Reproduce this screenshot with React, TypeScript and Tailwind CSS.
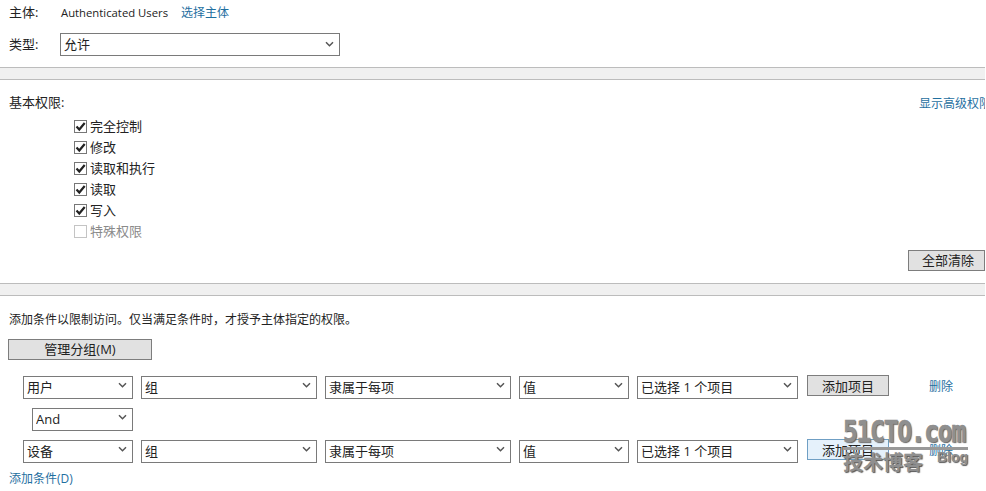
import React from 'react';

const font = "font-['Open_Sans','Noto_Sans_CJK_SC',sans-serif]";

// Dropdown with the flat Windows chevron
const Select = ({ value, width }: { value: string; width: string }) => (
  <div className={`relative h-[23px] shrink-0 ${width}`}>
    <select
      defaultValue={value}
      className="w-full h-full appearance-none bg-white border border-[#7a7a7a] pl-[3px] text-[13px] leading-[21px] text-[#222] outline-none"
    >
      <option>{value}</option>
    </select>
    <svg viewBox="0 0 10 8" className="absolute right-[6px] top-[8px] w-[9px] h-[7px] pointer-events-none">
      <path d="M1 1.5 L5 5.5 L9 1.5" fill="none" stroke="#555" strokeWidth="1.7" />
    </svg>
  </div>
);

const Check = ({ label, disabled }: { label: string; disabled?: boolean }) => (
  <label className={`flex items-center h-[21px] gap-[3px] text-[13px] ${disabled ? 'text-[#8a8a8a]' : 'text-[#222]'}`}>
    <span className={`w-[13px] h-[13px] border flex items-center justify-center bg-white ${disabled ? 'border-[#c4c4c4]' : 'border-[#777]'}`}>
      {!disabled && (
        <svg viewBox="0 0 11 11" className="w-[11px] h-[11px]">
          <path d="M1.5 5.5 L4.3 8.5 L9.7 2" fill="none" stroke="#222" strokeWidth="2.2" />
        </svg>
      )}
    </span>
    {label}
  </label>
);

const Band = () => <div className="h-[13px] bg-[#f0f0f0] border-y border-[#bcbcbc]" />;

const GrayButton = ({ label, className }: { label: string; className: string }) => (
  <button className={`border text-[13px] text-[#222] flex items-center justify-center ${className}`}>
    {label}
  </button>
);

const ConditionRow = ({ first, focused }: { first: string; focused?: boolean }) => (
  <div className="flex items-center h-[23px] pl-[23px]">
    <div className="flex gap-2">
      <Select value={first} width="w-[110px]" />
      <Select value="组" width="w-[176px]" />
      <Select value="隶属于每项" width="w-[186px]" />
      <Select value="值" width="w-[110px]" />
      <Select value="已选择 1 个项目" width="w-[161px]" />
    </div>
    <GrayButton
      label="添加项目"
      className={`ml-[9px] w-[82px] h-[21px] pt-[2px] ${focused ? 'bg-[#e5f1fb] border-[#6f9fc4]' : 'bg-[#e1e1e1] border-[#7d7d7d]'}`}
    />
    <a className="ml-10 pt-[2px] text-xs text-[#1f6f9f]">删除</a>
  </div>
);

export default function App() {
  return (
    <div className={`relative w-[985px] h-[491px] overflow-hidden bg-white ${font} text-[#222]`}>
      {/* principal and type */}
      <div className="flex items-center h-[26px] pl-[9px] text-[13px]">
        <span className="w-[52px]">主体:</span>
        <span className="text-[11.3px]">Authenticated Users</span>
        <a className="ml-[13px] text-xs text-[#1f6f9f]">选择主体</a>
      </div>
      <div className="flex items-center h-[23px] mt-[7px] pl-[9px] text-[13px]">
        <span className="w-[51px]">类型:</span>
        <Select value="允许" width="w-[280px]" />
      </div>
      <div className="h-[11px]" />
      <Band />

      {/* basic permissions */}
      <div className="flex justify-between h-[34px] pl-[9px] pt-[13px] text-[13px]">
        <span>基本权限:</span>
        <a className="w-[66px] h-[21px] pt-[3px] overflow-hidden whitespace-nowrap text-xs text-[#1f6f9f]">显示高级权限</a>
      </div>
      <div className="pl-[74px] mt-[2px]">
        <Check label="完全控制" />
        <Check label="修改" />
        <Check label="读取和执行" />
        <Check label="读取" />
        <Check label="写入" />
        <Check label="特殊权限" disabled />
      </div>
      <div className="flex justify-end mt-[8px]">
        <GrayButton label="全部清除" className="w-[77px] h-[21px] pl-[3px] bg-[#e1e1e1] border-[#7d7d7d]" />
      </div>
      <div className="h-[12px]" />
      <Band />

      {/* conditions */}
      <div className="pl-[9px] mt-[14px] h-[19px] text-xs leading-[19px]">添加条件以限制访问。仅当满足条件时，才授予主体指定的权限。</div>
      <div className="pl-2 mt-[10px]">
        <GrayButton label="管理分组(M)" className="w-[144px] h-[21px] bg-[#e1e1e1] border-[#7d7d7d]" />
      </div>
      <div className="mt-[14px]">
        <ConditionRow first="用户" />
        <div className="pl-[32px] my-[9px]">
          <Select value="And" width="w-[101px]" />
        </div>
        <ConditionRow first="设备" focused />
      </div>
      <a className="block pl-[9px] mt-[10px] text-xs text-[#1f6f9f]">添加条件(D)</a>

      {/* watermark over the page */}
      <div className="absolute left-[843px] top-[417px] w-[125px] text-[#8f8f8f] pointer-events-none">
        <div className="origin-top scale-y-125 font-['DejaVu_Sans_Mono',monospace] font-bold text-[24.5px] leading-[24px] tracking-[-1.2px] whitespace-nowrap [-webkit-text-stroke:0.6px_#8f8f8f] [text-shadow:1px_1px_1px_#555]">51CTO.com</div>
        <div className="h-[3px] mt-[6px] bg-[#999]" />
        <div className="flex justify-between items-start">
          <span className="font-['Noto_Sans_CJK_SC',sans-serif] font-bold text-[20px] leading-[24px] [text-shadow:1px_1px_1px_#555]">技术博客</span>
          <span className="font-['Liberation_Sans',sans-serif] font-bold text-[14px] leading-[14px] [text-shadow:1px_1px_1px_#555]">Blog</span>
        </div>
      </div>
    </div>
  );
}
